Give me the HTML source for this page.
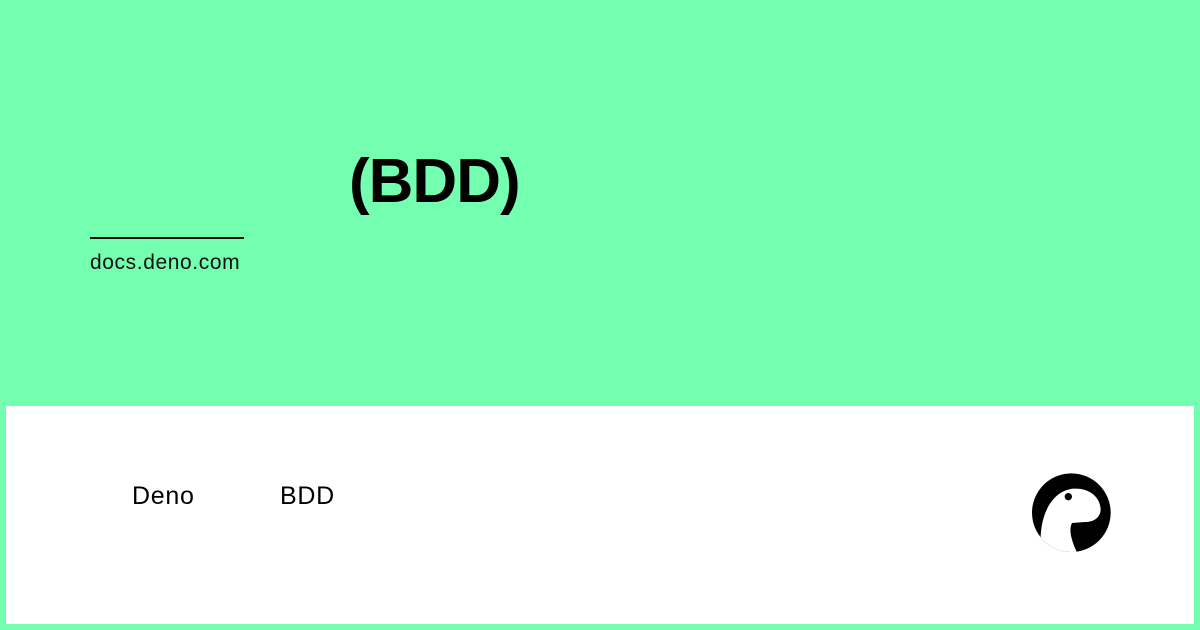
<!DOCTYPE html>
<html><head><meta charset="utf-8"><style>
body{margin:0;width:1200px;height:630px;background:#74ffb0;position:relative;overflow:hidden;font-family:"Liberation Sans","Noto Sans CJK SC",sans-serif;color:#000}
.t{position:absolute;left:349px;top:146px;font-size:62px;font-weight:bold;line-height:72px;letter-spacing:-1px}
.ln{position:absolute;left:90px;top:237px;width:154px;height:2px;background:#111}
.u{position:absolute;left:90px;top:250px;font-size:21px;line-height:26px;color:#111;letter-spacing:0.6px}
.box{position:absolute;left:6px;top:406px;width:1188px;height:218px;background:#fff}
.b{position:absolute;top:481px;font-size:25px;line-height:30px;letter-spacing:0.7px}
svg{position:absolute;left:1010px;top:460px}
</style></head><body>
<div class="t">(BDD)</div>
<div class="ln"></div>
<div class="u">docs.deno.com</div>
<div class="box"></div>
<div class="b" style="left:132px">Deno</div>
<div class="b" style="left:280px">BDD</div>
<svg width="120" height="100" viewBox="0 0 360 300">
<defs><clipPath id="c"><circle cx="184" cy="158" r="118"/></clipPath></defs>
<circle cx="184" cy="158" r="118" fill="#000"/>
<path clip-path="url(#c)" fill="#fff" d="M92,255 C88,160 128,92 190,86 C242,83 272,115 272,150 C270,174 250,186 225,186 L186,189 C176,208 182,240 205,285 L80,290 Z"/>
<circle cx="175" cy="110" r="11" fill="#000"/>
</svg>
</body></html>
